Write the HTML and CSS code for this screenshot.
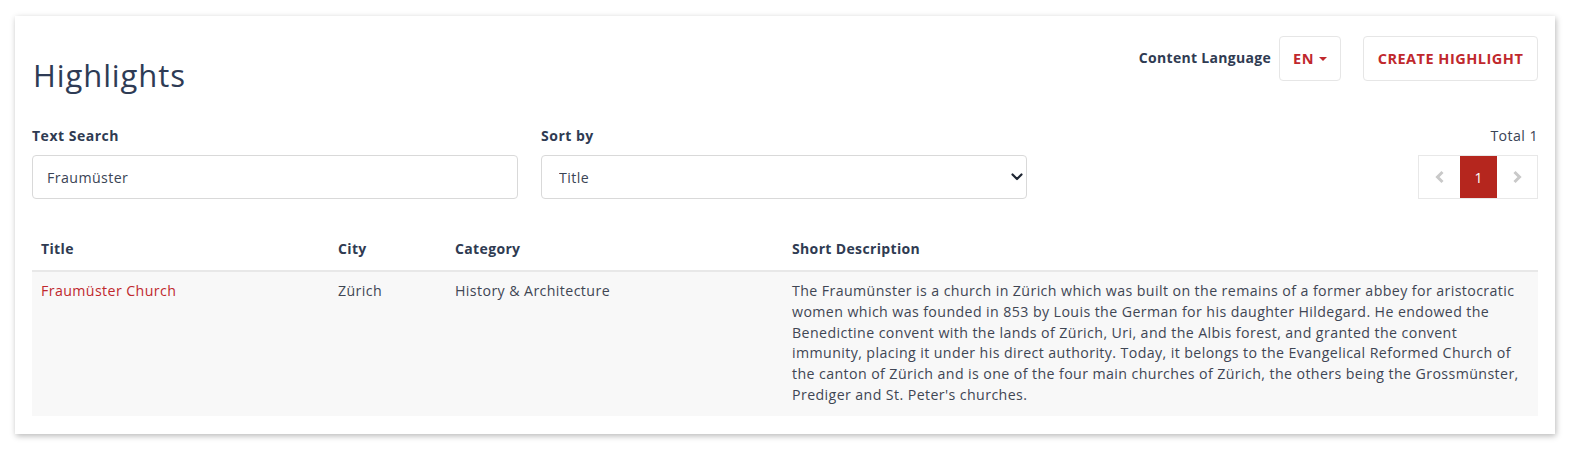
FILE: index.html
```html
<!DOCTYPE html>
<html lang="en">
<head>
<meta charset="utf-8">
<title>Highlights</title>
<link rel="stylesheet" href="styles.css">
</head>
<body>
<div class="card">
  <div class="header">
    <h1 class="page-title">Highlights</h1>
    <div class="header-actions">
      <span class="lang-label">Content Language</span>
      <button class="btn btn-lang">EN <span class="caret"></span></button>
      <button class="btn btn-create">CREATE HIGHLIGHT</button>
    </div>
  </div>

  <div class="filters">
    <div class="field">
      <label class="field-label">Text Search</label>
      <input class="control" type="text" value="Fraumüster">
    </div>
    <div class="field">
      <label class="field-label">Sort by</label>
      <div class="select-wrap">
        <select class="control select">
          <option>Title</option>
        </select>
        <svg class="select-arrow" width="12" height="8" viewBox="0 0 12 8"><path d="M1.5 1.5 L6 6 L10.5 1.5" fill="none" stroke="#1f2633" stroke-width="2.2" stroke-linecap="round" stroke-linejoin="round"/></svg>
      </div>
    </div>
    <div class="field field-right">
      <span class="total">Total 1</span>
      <div class="pager">
        <span class="page page-nav"><svg width="10" height="14" viewBox="0 0 10 14"><path d="M7.5 2 L2.5 7 L7.5 12" fill="none" stroke="#c9c9c9" stroke-width="3" stroke-linejoin="miter"/></svg></span>
        <span class="page page-active">1</span>
        <span class="page page-nav"><svg width="10" height="14" viewBox="0 0 10 14"><path d="M2.5 2 L7.5 7 L2.5 12" fill="none" stroke="#c9c9c9" stroke-width="3" stroke-linejoin="miter"/></svg></span>
      </div>
    </div>
  </div>

  <table class="table">
    <colgroup>
      <col class="c-title"><col class="c-city"><col class="c-cat"><col class="c-desc">
    </colgroup>
    <thead>
      <tr><th>Title</th><th>City</th><th>Category</th><th>Short Description</th></tr>
    </thead>
    <tbody>
      <tr>
        <td><a class="link" href="#">Fraumüster Church</a></td>
        <td>Zürich</td>
        <td>History &amp; Architecture</td>
        <td>The Fraumünster is a church in Zürich which was built on the remains of a former abbey for aristocratic women which was founded in 853 by Louis the German for his daughter Hildegard. He endowed the Benedictine convent with the lands of Zürich, Uri, and the Albis forest, and granted the convent immunity, placing it under his direct authority. Today, it belongs to the Evangelical Reformed Church of the canton of Zürich and is one of the four main churches of Zürich, the others being the Grossmünster, Prediger and St. Peter's churches.</td>
      </tr>
    </tbody>
  </table>
</div>
</body>
</html>
```
FILE: styles.css
```css
* { box-sizing: border-box; }
html, body { margin: 0; padding: 0; background: #ffffff; }
body {
  font-family: "Open Sans", "Noto Sans", sans-serif;
  color: #2f3b52;
  font-size: 14px;
  padding: 16px 17px 20px 15px;
}
.card {
  background: #fff;
  box-shadow: 1px 2px 6px rgba(0,0,0,0.28);
  padding: 20px 17px 20px 17px;
  height: 418px;
}
.header {
  display: flex;
  justify-content: space-between;
  align-items: flex-start;
}
.page-title {
  margin: 21px 0 0 1px;
  font-size: 31px;
  font-weight: 400;
  letter-spacing: 0.9px;
  line-height: 36px;
  color: #2e3b55;
}
.header-actions {
  display: flex;
  align-items: center;
}
.lang-label {
  font-weight: 700;
  font-size: 14px;
  letter-spacing: 0.3px;
  color: #2f3b52;
  margin-right: 8px;
  position: relative;
  top: -1px;
}
.btn {
  font-family: inherit;
  background: #fff;
  border: 1px solid #e6e6e6;
  border-radius: 4px;
  height: 45px;
  color: #c0282d;
  font-weight: 700;
  font-size: 14.5px;
  letter-spacing: 0.5px;
  cursor: pointer;
}
.btn-lang {
  width: 62px;
  padding: 0;
  display: flex;
  align-items: center;
  justify-content: center;
  gap: 5px;
}
.caret {
  width: 0; height: 0;
  border-left: 4px solid transparent;
  border-right: 4px solid transparent;
  border-top: 4px solid #c0282d;
}
.btn-create {
  margin-left: 22px;
  width: 175px;
  padding: 0;
}
.filters {
  display: grid;
  grid-template-columns: 486px 486px 1fr;
  column-gap: 23px;
  margin-top: 34px;
}
.field { display: flex; flex-direction: column; }
.field-label {
  font-weight: 700;
  font-size: 14px;
  letter-spacing: 0.5px;
  line-height: 18px;
  margin-bottom: 10px;
  color: #2f3b52;
}
.control {
  font-family: inherit;
  height: 44px;
  border: 1px solid #d9d9d9;
  border-radius: 4px;
  padding: 0 14px;
  font-size: 14.2px;
  letter-spacing: 0.42px;
  color: #3a4455;
  background: #fff;
  width: 100%;
}
.select-wrap { position: relative; }
.select { appearance: none; -webkit-appearance: none; padding-left: 17px; }
.select-arrow { position: absolute; right: 4px; top: 18px; }
.field-right { align-items: flex-end; }
.total {
  font-size: 14.2px;
  letter-spacing: 0.42px;
  line-height: 18px;
  margin-bottom: 10px;
  color: #3a4455;
}
.pager {
  display: flex;
  border: 1px solid #e8e8e8;
  height: 44px;
}
.page {
  display: flex;
  align-items: center;
  justify-content: center;
  height: 100%;
}
.page-nav { width: 40px; }
.page-nav:first-child { width: 41px; }
.page-active {
  width: 37px;
  background: #b5261e;
  color: #fff;
  font-size: 14px;
}
.table {
  width: 100%;
  border-collapse: collapse;
  margin-top: 28px;
  table-layout: fixed;
}
.c-title { width: 297px; }
.c-city { width: 117px; }
.c-cat { width: 337px; }
.table th {
  text-align: left;
  font-weight: 700;
  font-size: 14px;
  letter-spacing: 0.35px;
  padding: 12px 9px 12px 9px;
  border-bottom: 2px solid #e8e8e8;
  color: #2f3b52;
}
.table td {
  vertical-align: top;
  background: #f8f8f8;
  padding: 9px 9px 10px 9px;
  font-size: 14.2px;
  letter-spacing: 0.4px;
  line-height: 20.8px;
  color: #3f4654;
}
.link { color: #c0282d; text-decoration: none; }
```
